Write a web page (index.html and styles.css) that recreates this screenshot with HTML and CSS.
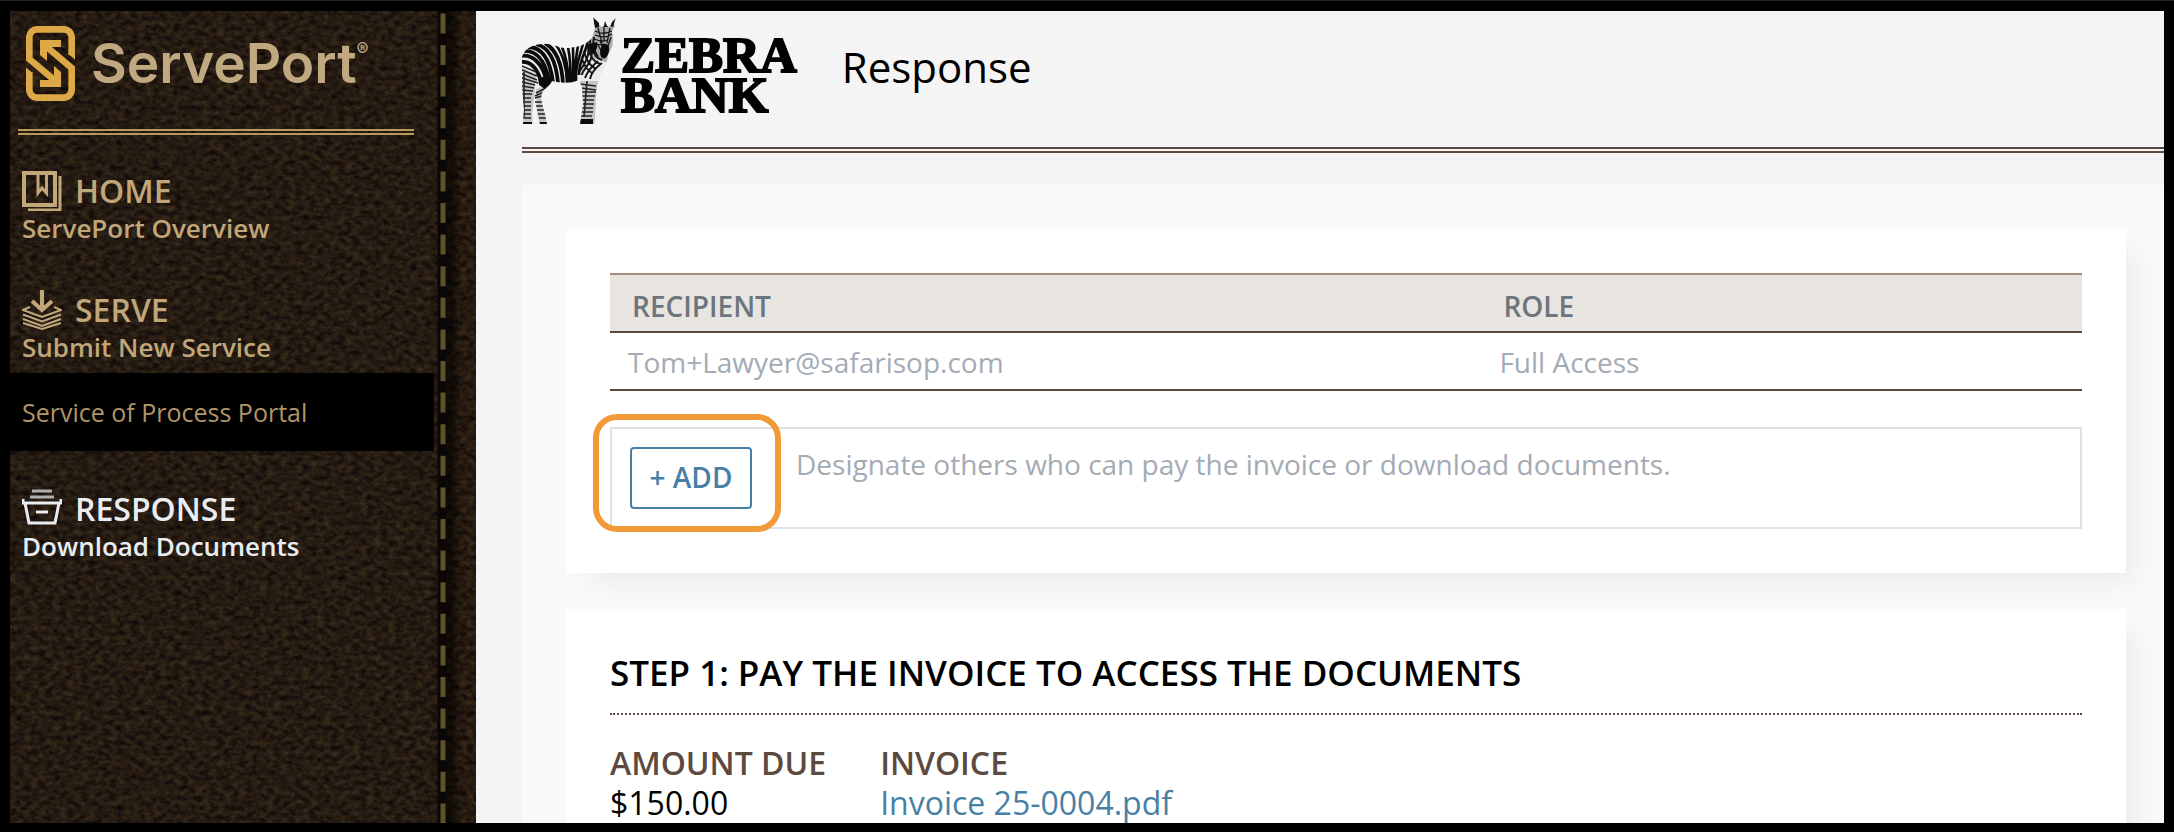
FILE: index.html
```html
<!DOCTYPE html>
<html lang="en">
<head>
  <meta charset="UTF-8" />
  <meta name="viewport" content="width=device-width, initial-scale=1" />
  <title>ServePort - Response</title>
  <link rel="stylesheet" href="styles.css">
</head>
<body>
  <aside class="sidebar">
    <!-- leather and stitching -->
    <svg class="leather" aria-hidden="true">
      <filter id="grain" x="0" y="0" width="100%" height="100%" color-interpolation-filters="sRGB">
        <feTurbulence type="fractalNoise" baseFrequency="0.14 0.2" numOctaves="4" seed="7" />
        <feColorMatrix values="0.24 0.06 0 0 -0.005  0.22 0.02 0 0 -0.015  0.13 0 0.05 0 -0.02  0 0 0 0 1" />
      </filter>
      <filter id="soft" x="-100%" y="0" width="300%" height="100%">
        <feGaussianBlur stdDeviation="3 0" />
      </filter>
      <rect width="100%" height="100%" filter="url(#grain)" />
      <rect x="432" y="0" width="14" height="100%" fill="#000" opacity="0.6" filter="url(#soft)" />
      <line x1="432" y1="0" x2="432" y2="2000" stroke="#0a0706" stroke-width="9" />
      <line x1="433" y1="2.400" x2="433" y2="2000" stroke="#5e5229" stroke-width="5" stroke-dasharray="20 11.6" />
    </svg>

    <div class="brand">
      <svg class="brand-mark" viewBox="0 0 49 75" aria-hidden="true">
        <g id="half">
          <path d="M45.700 29V11.300a8 8 0 0 0-8-8H11.300a8 8 0 0 0-8 8V33L27 53" fill="none" stroke="#dda947" stroke-width="6.700" />
          <path d="M42.300 28l6.700 5.500V28zM28 40l7 6v15H14v-7h10l4-4z" fill="#dda947" />
        </g>
        <use href="#half" transform="rotate(180 24.500 37.500)" />
      </svg>
      <span class="brand-name">ServePort<sup>®</sup></span>
    </div>

    <nav class="menu">
      <a class="item" href="#home">
        <span class="item-title">
          <svg class="item-icon" viewBox="0 0 40 40" aria-hidden="true">
            <path class="thick" d="M2 2h31v32H2z" />
            <path d="M6 39h32V5" />
            <path d="M16 3v19l4-5 4.500 5V3" />
          </svg>
          HOME
        </span>
        <span class="item-sub">ServePort Overview</span>
      </a>
      <a class="item" href="#serve">
        <span class="item-title">
          <svg class="item-icon" viewBox="0 0 40 40" aria-hidden="true">
            <path class="thick" d="M20 0v20M10 11l10 9 10-9" />
            <path class="thin" d="M8 17l-7 3 19 7 19-7-7-3M1 24.500l19 7 19-7M1 29l19 7 19-7" />
            <path class="thin" d="M1 33l19 6 19-6" />
          </svg>
          SERVE
        </span>
        <span class="item-sub">Submit New Service</span>
      </a>
      <a class="portal" href="#portal">Service of Process Portal</a>
      <a class="item current" href="#response">
        <span class="item-title">
          <svg class="item-icon" viewBox="0 0 40 40" aria-hidden="true">
            <path d="M10 2h20M8 8h24" opacity="0.700" />
            <path d="M1 10v4h38v-4M3 14l4 20h26l4-20M14 23h12" />
          </svg>
          RESPONSE
        </span>
        <span class="item-sub">Download Documents</span>
      </a>
    </nav>
  </aside>

  <main class="main">
    <header class="header">
      <svg class="zebra" viewBox="0 0 94 110" aria-hidden="true">
        <clipPath id="zebra-body">
          <path d="M0 40C2 33 8 28 20 27c10-1 16 4 23 4 9 0 18-2 24-7 4-3 4-7 6-13l-1-3-1-8 6 6 2 4 3-1 1-5 2 5 3 1 2-5 4-4-1 8-3 5c1 6 1 10 0 16l-4 8c-1 7-3 12-6 18-5 7-5 16-6 24l-1 18 0 9H58l1-6 2-14-1-17-3-7c-9 4-18 3-27 1-2 5-7 7-10 12-2 6 1 14 3 21l2 10h-7l-3-10-3-16-2 16 2 10H1l1-15-2-21z" />
        </clipPath>
        <g clip-path="url(#zebra-body)">
          <rect width="94" height="110" fill="#ececec" />
          <path d="M66 20L73 8h20v28l-6 10-14-4-10-8z" fill="#aaa" />
          <path d="M58 64h20l-6 46H56zM0 50l14 8-4 50H0zM14 72l12-4 1 42H16z" fill="#c4c4c4" />
          <!-- rump and flank -->
          <g fill="none" stroke="#0b0b0b" stroke-width="3.800">
            <path d="M-1 39C10 37 20 46 24 62M1 34c12-1 22 8 26 30M6 30c12 0 22 10 25 36M14 27c12 3 20 15 22 39M23 26c10 6 17 20 18 41M-1 45c9-1 15 5 19 16" />
            <path stroke-width="2.600" d="M34 28c6 8 11 22 11 38M40 30c4 9 6 20 7 36M46 30c2 10 3 22 2 36M51 29c0 12 1 24-1 37M56 28c-1 10-5 24-3 37M61 26c-2 12-8 20-7 38M66 22c-1 12-9 20-9 36" />
          </g>
          <!-- shoulder and neck -->
          <g fill="none" stroke="#151515" stroke-width="2">
            <path d="M64 24c6 12 0 20-6 30M68 22c0 10 4 14 0 22s-8 10-8 14M72 20c-2 8 0 14 4 20M76 44c-6 5-10 9-13 17M80 46c-7 5-11 11-12 16M70 30c2 8 6 12 10 13M66 31c2 9 6 14 12 16M62 34c2 9 6 15 12 18M60 42c2 6 5 11 10 14" />
            <path d="M73 14c5 3 12 3 17 0M73 18c5 2 12 3 17-1M72 22c5 2 9 3 13 1M72 26c4 2 8 2 10 1M76 11l4 15M88 11l-3 15M82 9v16M74 25l6 10M78 24l4 8M89 20l-4 12" stroke-width="1.300" />
          </g>
          <path d="M66 27c4 0 6-3 9 0 1 5-2 7-4 10-4-3-5-6-5-10zM80 28c4-3 8 0 7 6-1 5-4 9-7 7-3-3-2-9 0-13z" fill="#0b0b0b" />
          <path d="M71 0l6 5v5l-4 1zM94 0l-3 10-4-1 1-5zM82 3h4v7h-4z" fill="#111" />
          <!-- legs -->
          <path d="M16 61l14-3-1 9-6 5-6-4z" fill="#0b0b0b" />
          <g fill="none" stroke="#222" stroke-width="1.400">
            <path d="M0 49l14 6M0 53l15 6M0 57l15 6M0 61l16 5M0 65l13 3M0 69l12 2M0 73l11 1M0 77h10M0 81h9M1 85h8M1 89h8M1 93h8M1 97h8M1 101h8" />
            <path d="M24 71l-10 5M22 75l-9 4M20 79l-7 2M13 85h9M14 89h9M15 93h8M16 97h9M17 101h9" />
            <path d="M58 67l16 2M59 71l15 2M60 75h14M60 79h13M60 83h12M59 87h13M59 91h12M59 95h12M58 99h12" />
            <path d="M2 55v46M65 64l-3 36" stroke-width="1.600" />
          </g>
          <path d="M0 105h10v5H0zM17 105h10v5H17zM57 102h14v8H57z" fill="#0b0b0b" />
        </g>
      </svg>
      <div class="bank-name">ZEBRA<br>BANK</div>
      <h1>Response</h1>
    </header>

    <div class="panel">
      <section class="card">
        <table class="recipients">
          <thead>
            <tr><th>RECIPIENT</th><th>ROLE</th></tr>
          </thead>
          <tbody>
            <tr><td>Tom+Lawyer@safarisop.com</td><td>Full Access</td></tr>
          </tbody>
        </table>
        <div class="add-row">
          <div class="add-wrap">
            <button type="button" class="add-btn">+ ADD</button>
          </div>
          <p>Designate others who can pay the invoice or download documents.</p>
        </div>
      </section>

      <section class="card">
        <h2>STEP 1: PAY THE INVOICE TO ACCESS THE DOCUMENTS</h2>
        <dl class="invoice">
          <div>
            <dt>AMOUNT DUE</dt>
            <dd>$150.00</dd>
          </div>
          <div>
            <dt>INVOICE</dt>
            <dd><a href="#invoice">Invoice 25-0004.pdf</a></dd>
          </div>
        </dl>
      </section>
    </div>
  </main>
</body>
</html>
```
FILE: styles.css
```css
* {
  box-sizing: border-box;
}

body {
  display: flex;
  height: 100vh;
  margin: 0;
  padding: 10px 10px 9px;
  border-top: 1px solid #222;
  overflow: hidden;
  background-color: #000;
  color: #000;
  font-family: "Open Sans", "Noto Sans", sans-serif;
}

a {
  text-decoration: none;
}

/* Sidebar */
.sidebar {
  position: relative;
  flex: 0 0 466px;
  overflow: hidden;
  background-color: #241a13;
}

.leather {
  position: absolute;
  top: 0;
  left: 0;
  width: 100%;
  height: 100%;
}

.brand {
  position: relative;
  display: flex;
  align-items: center;
  gap: 16px;
  margin: 0 62px 36px 8px;
  padding: 15px 0 28px 8px;
  border-bottom: 6px double #b8985c;
}

.brand-mark {
  width: 49px;
  height: 75px;
}

.brand-name {
  color: #c0a980;
  font-family: Inter, sans-serif;
  font-size: 55px;
  font-weight: 600;
  line-height: 75px;
}

.brand-name sup {
  font-size: 18px;
  line-height: 18px;
  vertical-align: 27px;
}

.menu {
  position: relative;
  display: flex;
  flex-direction: column;
}

.item {
  padding-left: 12px;
  color: #c0a678;
  font-weight: 600;
}

.item + .item {
  margin-top: 45px;
}

.item-title {
  display: flex;
  align-items: center;
  gap: 13px;
  font-size: 32px;
  line-height: 40px;
}

.item-icon {
  width: 40px;
  height: 40px;
  fill: none;
  stroke: currentColor;
  stroke-width: 3;
}

.item-icon .thick {
  stroke-width: 4;
}

.item-icon .thin {
  stroke-width: 2;
}

.item-sub {
  display: block;
  font-size: 26px;
  line-height: 34px;
}

.portal {
  margin: 9px 42px 38px 0;
  padding: 0 12px;
  background-color: #000;
  color: #b09567;
  font-size: 25px;
  line-height: 78px;
}

.current {
  color: #e9edf1;
}

/* Main */
.main {
  flex: 1;
  min-width: 0;
  padding-left: 46px;
  overflow: hidden;
  background-color: #f4f4f4;
}

.header {
  display: flex;
  align-items: flex-start;
  height: 142px;
  padding-top: 6px;
  border-bottom: 6px double #5c4a40;
}

.zebra {
  width: 94px;
  height: 110px;
}

.bank-name {
  margin: 18px 0 0 5px;
  font-family: "Liberation Serif", serif;
  font-size: 51px;
  font-weight: bold;
  line-height: 40px;
  -webkit-text-stroke: 2px #000;
}

h1 {
  margin: 20px 0 0 45px;
  font-size: 42px;
  font-weight: 400;
  line-height: 60px;
}

.panel {
  margin-top: 32px;
  padding: 44px 38px 44px 44px;
  background-color: #f9f9f9;
}

.card {
  padding: 44px;
  background-color: #fff;
  box-shadow: 16px 16px 24px -8px rgba(0, 0, 0, 0.06);
}

.card + .card {
  margin-top: 36px;
}

.recipients {
  width: 100%;
  border-collapse: collapse;
  table-layout: fixed;
  font-size: 28px;
  line-height: 40px;
  text-align: left;
}

.recipients th:first-child {
  width: 59.2%;
}

.recipients th {
  padding: 11px 22px 5px;
  border-top: 2px solid #a58d80;
  background-color: #e8e4df;
  color: #6c757d;
  font-weight: 600;
}

.recipients td {
  padding: 9px 18px 7px;
  color: #a3abb4;
}

.recipients th,
.recipients td {
  border-bottom: 2px solid #5c4a40;
}

.add-row {
  display: flex;
  align-items: flex-start;
  gap: 15px;
  height: 102px;
  margin-top: 36px;
  border: 2px solid #dee2e6;
}

.add-row p {
  margin: 15px 0 0;
  color: #a3abb4;
  font-size: 28px;
  line-height: 40px;
}

/* orange ring laps over the box border */
.add-wrap {
  margin: -15px 0 0 -19px;
  padding: 27px 23px 17px 31px;
  border: 6px solid #f29a38;
  border-radius: 24px;
}

.add-btn {
  display: block;
  width: 122px;
  height: 62px;
  padding: 0 0 2px;
  border: 2px solid #4880a5;
  border-radius: 4px;
  background-color: #fff;
  color: #4880a5;
  font-family: inherit;
  font-size: 28px;
  font-weight: 600;
  cursor: pointer;
}

h2 {
  margin: 0 0 28px;
  padding: 0 0 20px;
  border-bottom: 2px dotted #5c4a40;
  font-size: 35px;
  font-weight: 600;
  line-height: 40px;
}

.invoice {
  display: flex;
  gap: 54px;
  margin: 0;
  font-size: 32px;
  line-height: 40px;
}

.invoice dt {
  color: #5c4a40;
  font-weight: 600;
}

.invoice dd {
  margin: 0;
}

.invoice a {
  color: #4880a5;
}
```
